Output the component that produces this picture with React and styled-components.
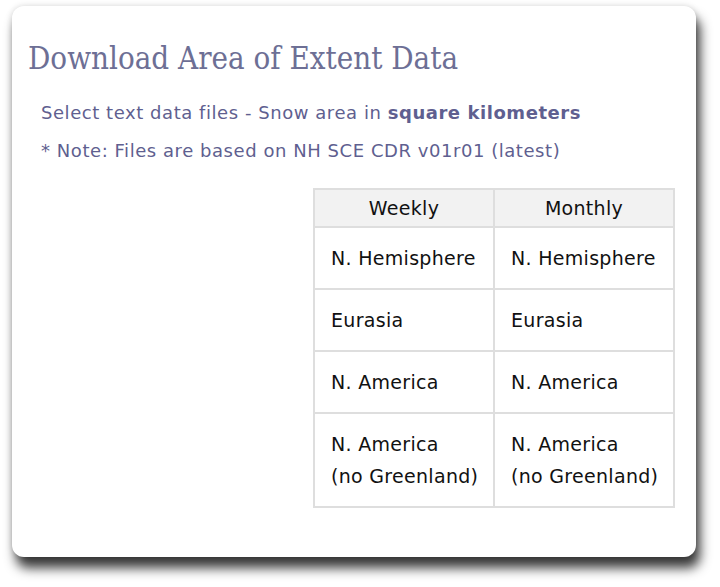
import React from 'react';
import styled, {createGlobalStyle} from 'styled-components';

const regions = [
  'N. Hemisphere',
  'Eurasia',
  'N. America',
  ['N. America', '(no Greenland)'],
];

const GlobalStyle = createGlobalStyle`
  html, body {
    margin: 0;
    padding: 0;
    background: #fff;
  }
`;

const App = () => {
  return (
    <Page>
      <GlobalStyle />
      <Card>
        <Title>Download Area of Extent Data</Title>
        <Intro>
          <Line>
            Select text data files - Snow area in <b>square kilometers</b>
          </Line>
          <Line>* Note: Files are based on NH SCE CDR v01r01 (latest)</Line>
        </Intro>
        <TableWrap>
          <Table>
            <colgroup>
              <col width="180" />
              <col width="180" />
            </colgroup>
            <thead>
              <tr>
                <Head>Weekly</Head>
                <Head>Monthly</Head>
              </tr>
            </thead>
            <tbody>
              {regions.map((r, i) => (
                <tr key={i}>
                  {[0, 1].map((c) => (
                    <Cell key={c}>
                      {Array.isArray(r) ? (
                        <>
                          {r[0]}
                          <br />
                          {r[1]}
                        </>
                      ) : (
                        r
                      )}
                    </Cell>
                  ))}
                </tr>
              ))}
            </tbody>
          </Table>
        </TableWrap>
      </Card>
    </Page>
  );
};

export default App;

const Page = styled.div`
  width: 720px;
  height: 587px;
  padding: 6px 24px 30px 12px;
  box-sizing: border-box;
`;

const Card = styled.div`
  width: 684px;
  height: 551px;
  box-sizing: border-box;
  background: #fff;
  border-radius: 12px;
  box-shadow: 4px 11px 12px rgba(0, 0, 0, 0.78), 0 0 6px rgba(0, 0, 0, 0.15);
  padding: 34px 21px 0 16px;
`;

const Title = styled.h1`
  margin: 0;
  font-family: 'DejaVu Serif Condensed', 'DejaVu Serif', serif;
  font-stretch: condensed;
  font-weight: normal;
  font-size: 31px;
  line-height: 36px;
  color: #6d6f95;
`;

const Intro = styled.div`
  margin-top: 18px;
  padding-left: 13px;
  font-family: Verdana, 'DejaVu Sans', sans-serif;
  font-size: 18px;
  letter-spacing: 0.55px;
  color: #5f5f90;

  b {
    font-weight: bold;
  }
`;

const Line = styled.p`
  margin: 0;
  line-height: 38px;
`;

const TableWrap = styled.div`
  display: flex;
  justify-content: flex-end;
  margin-top: 18px;
`;

const Table = styled.table`
  table-layout: fixed;
  width: 360px;
  border-collapse: collapse;
  border: 2px solid #dedede;
  font-family: Verdana, 'DejaVu Sans', sans-serif;
  font-size: 19px;
  letter-spacing: 0.3px;
  color: #111;
`;

const Head = styled.th`
  background: #f2f2f2;
  border: 2px solid #dedede;
  font-weight: normal;
  line-height: 32px;
  padding: 2px 8px;
  text-align: center;
`;

const Cell = styled.td`
  border: 2px solid #dedede;
  line-height: 32px;
  padding: 14px 3px 14px 16px;
  text-align: left;
  vertical-align: middle;
  white-space: nowrap;
`;
